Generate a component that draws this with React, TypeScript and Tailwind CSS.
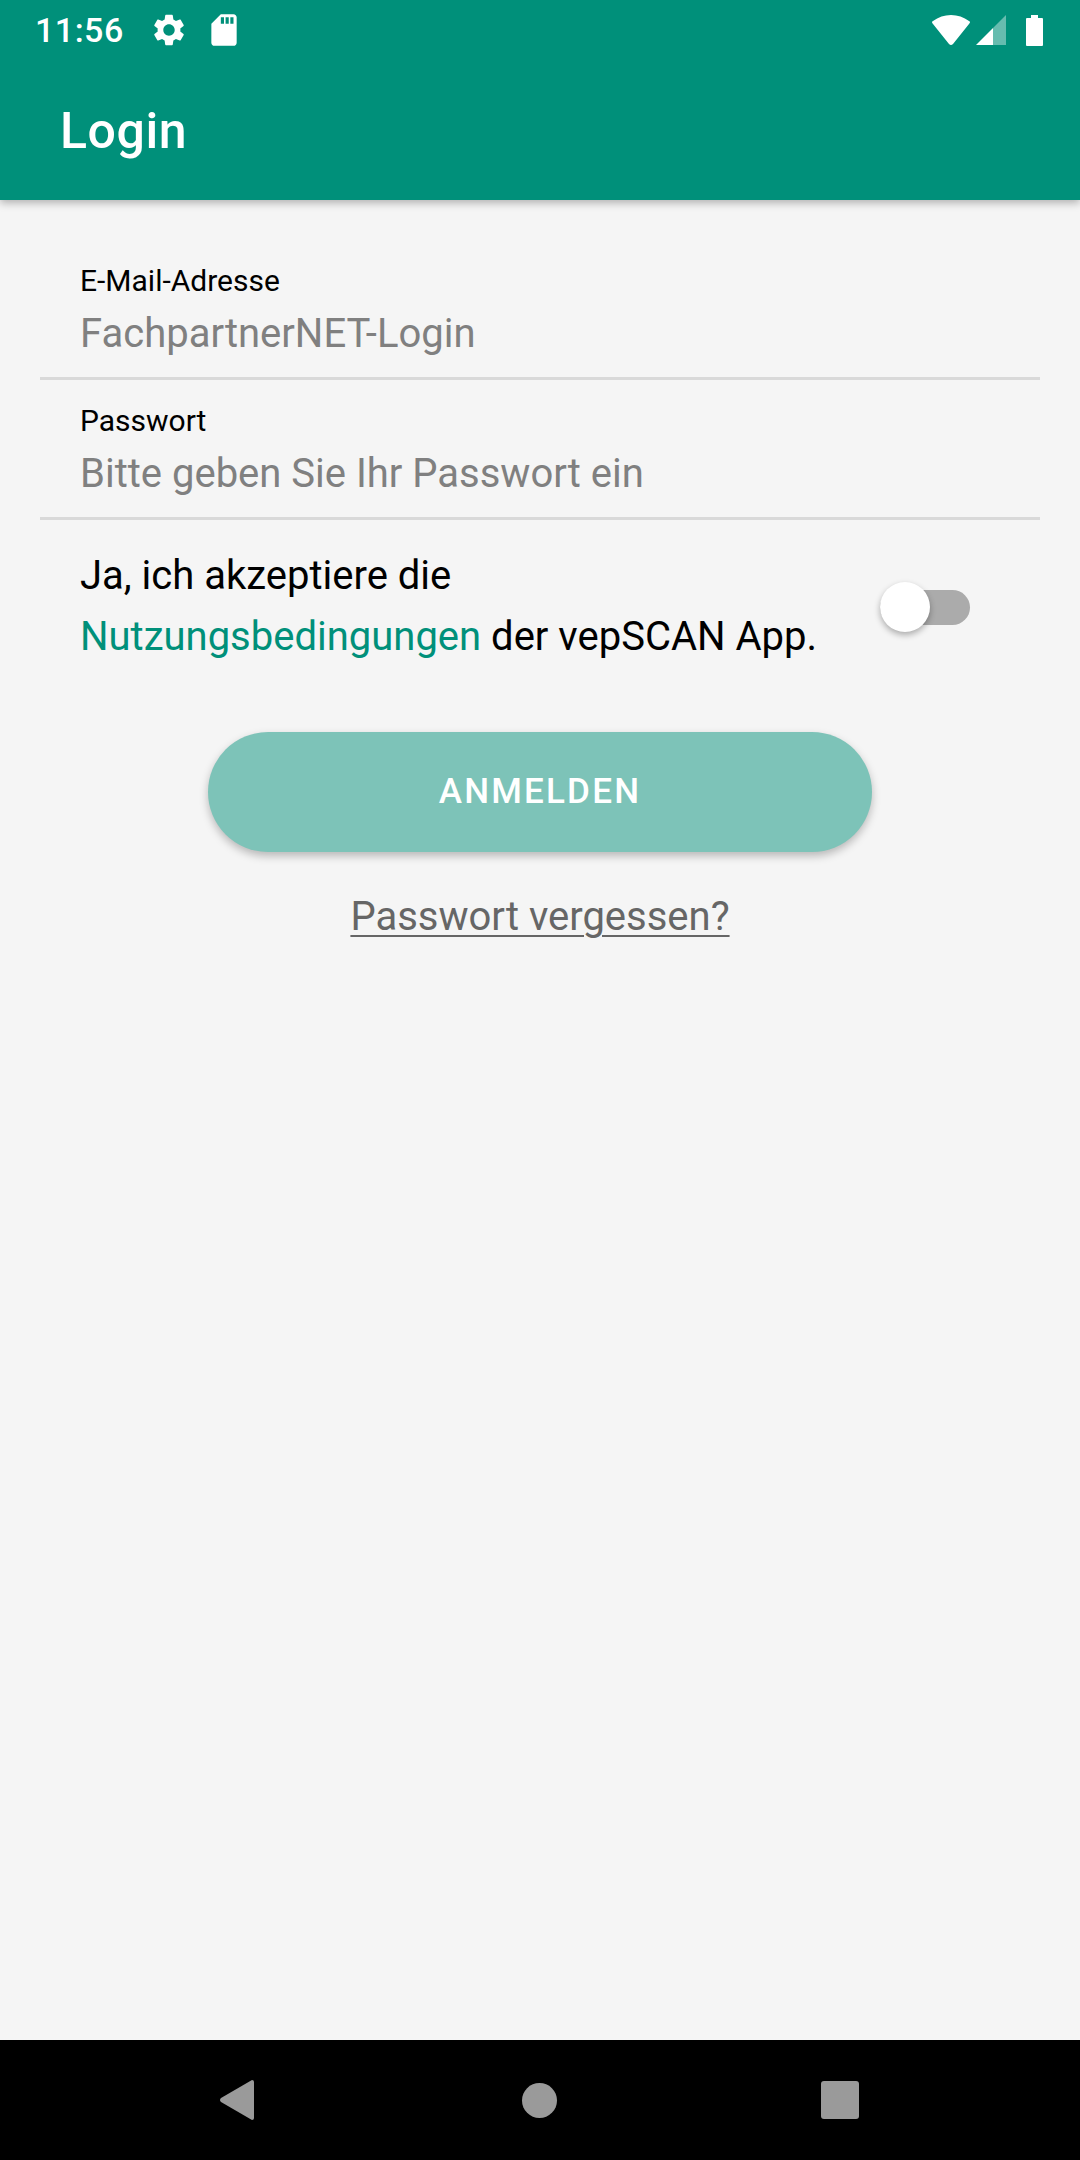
const SETTINGS_PATH =
  'M19.14 12.94c.04-.3.06-.61.06-.94 0-.32-.02-.64-.07-.94l2.03-1.58c.18-.14.23-.41.12-.61l-1.92-3.32c-.12-.22-.37-.29-.59-.22l-2.39.96c-.5-.38-1.03-.7-1.62-.94l-.36-2.54c-.04-.24-.24-.41-.48-.41h-3.84c-.24 0-.43.17-.47.41l-.36 2.54c-.59.24-1.13.57-1.62.94l-2.39-.96c-.22-.08-.47 0-.59.22L2.74 8.87c-.12.21-.08.47.12.61l2.03 1.58c-.05.3-.09.63-.09.94s.02.64.07.94l-2.03 1.58c-.18.14-.23.41-.12.61l1.92 3.32c.12.22.37.29.59.22l2.39-.96c.5.38 1.03.7 1.62.94l.36 2.54c.05.24.24.41.48.41h3.84c.24 0 .44-.17.47-.41l.36-2.54c.59-.24 1.13-.56 1.62-.94l2.39.96c.22.08.47 0 .59-.22l1.92-3.32c.12-.22.07-.47-.12-.61l-2.01-1.58zM12 15.6c-1.98 0-3.6-1.62-3.6-3.6s1.62-3.6 3.6-3.6 3.6 1.62 3.6 3.6-1.62 3.6-3.6 3.6z';
const SD_PATH =
  'M18 2h-8L4.02 8 4 20c0 1.1.9 2 2 2h12c1.1 0 2-.9 2-2V4c0-1.1-.9-2-2-2zm-6 6h-2V4h2v4zm3 0h-2V4h2v4zm3 0h-2V4h2v4z';

function StatusBar() {
  return (
    <div className="flex h-[60px] items-center pl-[35px] pr-[37px] text-white">
      <span className="w-[88px] text-[34px] leading-[60px] font-medium tracking-[0.5px]">11:56</span>
      <svg viewBox="0 0 24 24" className="ml-[27px] h-[38px] w-[38px]" fill="currentColor">
        <path d={SETTINGS_PATH} />
      </svg>
      <svg viewBox="0 0 24 24" className="ml-[17px] h-[38px] w-[38px]" fill="currentColor">
        <path d={SD_PATH} />
      </svg>
      <div className="ml-auto flex items-center">
        <svg viewBox="0 0 38 30" className="h-[30px] w-[38px]" fill="currentColor">
          <path d="M19 30 Q18 30 17 29 L1 9 Q-1 7 1 6 Q9 0 19 0 Q29 0 37 6 Q39 7 37 9 L21 29 Q20 30 19 30 Z" />
        </svg>
        <svg viewBox="0 0 30 30" className="ml-[6px] h-[30px] w-[30px]" fill="currentColor">
          <path d="M30 0 V30 H17 V13 Z" opacity="0.4" />
          <path d="M17 13 V30 H0 Z" />
        </svg>
        <svg viewBox="0 0 17 31" className="ml-[20px] h-[31px] w-[17px]" fill="currentColor">
          <path d="M5 0 H12 V3 H16 Q17 3 17 4 V30 Q17 31 16 31 H1 Q0 31 0 30 V4 Q0 3 1 3 H5 Z" />
        </svg>
      </div>
    </div>
  );
}

function Field({ label, placeholder }: { label: string; placeholder: string }) {
  return (
    <div className="h-[140px] border-b-[3px] border-[#d9d9d9] pl-[40px]">
      <div className="pt-[21px] text-[30px] leading-[40px] text-black">{label}</div>
      <div className="mt-[5px] text-[40px] leading-[56px] text-[#808080]">{placeholder}</div>
    </div>
  );
}

export default function App() {
  return (
    <div className="flex h-[2160px] w-[1080px] flex-col overflow-hidden bg-[#f5f5f5] font-['Roboto',sans-serif]">
      <header className="relative z-10 h-[200px] bg-[#00907a] shadow-[0_3px_8px_rgba(0,0,0,0.28)]">
        <StatusBar />
        <h1 className="pl-[60px] pt-[41px] text-[50px] leading-[60px] font-medium tracking-[0.6px] text-white">Login</h1>
      </header>

      <main className="flex flex-1 flex-col">
        <div className="mx-[40px] mt-[40px]">
          <Field label="E-Mail-Adresse" placeholder="FachpartnerNET-Login" />
          <Field label="Passwort" placeholder="Bitte geben Sie Ihr Passwort ein" />
        </div>

        <div className="mt-[25px] flex items-center pl-[80px] pr-[110px]">
          <p className="text-[40px] leading-[61px] text-black">
            Ja, ich akzeptiere die
            <br />
            <span className="text-[#00907a]">Nutzungsbedingungen</span> der vepSCAN App.
          </p>
          <div className="mt-[3px] ml-auto flex h-[50px] w-[90px] items-center">
            <div className="relative h-[35px] w-full rounded-full bg-[#ababab]">
              <div className="absolute top-[-8px] left-0 h-[50px] w-[50px] rounded-full bg-white shadow-[0_3px_6px_rgba(0,0,0,0.3)]" />
            </div>
          </div>
        </div>

        <button className="mx-auto mt-[65px] h-[120px] w-[664px] rounded-full bg-[#7dc3b8] text-[35px] font-medium tracking-[2.2px] text-white shadow-[0_4px_8px_rgba(0,0,0,0.25)]">
          ANMELDEN
        </button>

        <a className="mt-[40px] text-center text-[40px] leading-[50px] text-[#666666] underline decoration-2 underline-offset-[5px]">
          Passwort vergessen?
        </a>
      </main>

      <nav className="flex h-[120px] items-center bg-black pl-[220px]">
        <svg viewBox="0 0 34 40" className="h-[40px] w-[34px]" fill="#9a9a9a">
          <path d="M34 2 V38 Q34 40 32 40 L1 22 Q-1 20 1 18 L32 0 Q34 0 34 2 Z" />
        </svg>
        <div className="ml-[268px] h-[35px] w-[35px] rounded-full bg-[#9a9a9a]" />
        <div className="ml-[264px] h-[38px] w-[38px] rounded-[3px] bg-[#9a9a9a]" />
      </nav>
    </div>
  );
}
